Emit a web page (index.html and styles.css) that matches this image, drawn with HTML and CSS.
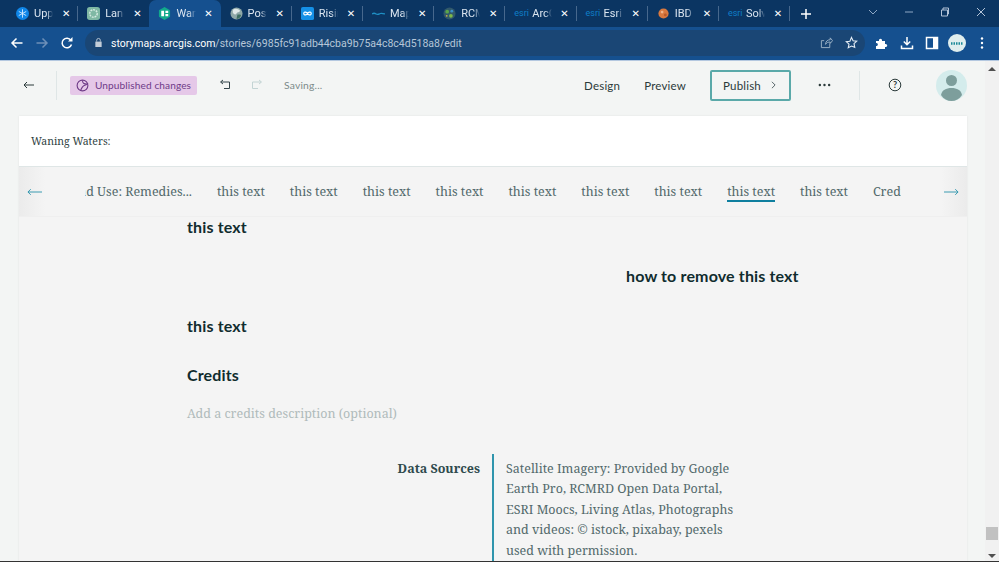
FILE: index.html
```html
<!DOCTYPE html>
<html lang="en">
<head>
<meta charset="utf-8">
<title>Waning Waters</title>
<link rel="stylesheet" href="styles.css">
</head>
<body>
<div class="tabstrip">
  <div class="tab sep"><svg class="fav" viewBox="0 0 14 14"><circle cx="7" cy="7" r="7" fill="#0f86e8"/><g stroke="#cfe8ff" stroke-width="1" fill="none"><path d="M7 2.500v9M3 4.800l8 4.400M3 9.200l8-4.400"/></g></svg><span class="title">Upper</span><span class="close">✕</span></div>
  <div class="tab"><svg class="fav" viewBox="0 0 14 14"><rect width="14" height="14" rx="3" fill="#7fb8a4"/><circle cx="7" cy="7" r="4" fill="none" stroke="#d6ebe2" stroke-width="1.600" stroke-dasharray="2 1"/></svg><span class="title">Land</span><span class="close">✕</span></div>
  <div class="tab active"><svg class="fav" viewBox="0 0 14 14"><path d="M7 0l6 3.500v7L7 14l-6-3.500v-7z" fill="#11a98c"/><path d="M3.500 4h3v6h-3zM8 4h3v2.500H8zM8 7.500h3V10H8z" fill="#fff"/></svg><span class="title">Waning</span><span class="close">✕</span></div>
  <div class="tab sep"><svg class="fav" viewBox="0 0 14 14"><circle cx="7" cy="7" r="6.500" fill="#8fa8a8"/><path d="M3 3c3-2 6-1 8 1-1 2-3 1-4 3S4 8 3 6z" fill="#dfe8e8"/><path d="M8 8c2 0 4 0 4 1-1 3-3 4-5 4z" fill="#3e6e62"/></svg><span class="title">Post</span><span class="close">✕</span></div>
  <div class="tab sep"><svg class="fav" viewBox="0 0 14 14"><rect width="14" height="14" rx="2" fill="#1590e6"/><path d="M3 7c0-3 4-1 4 0s4 3 4 0-4-1-4 0-4 3-4 0z" fill="none" stroke="#fff" stroke-width="1.300"/></svg><span class="title">Rising</span><span class="close">✕</span></div>
  <div class="tab sep"><svg class="fav" viewBox="0 0 14 14"><path d="M0 7.500c2-1.500 3-1 4.500 0s3 0 4.500-.5 3 0 5 .5" fill="none" stroke="#1f8fc4" stroke-width="1.400"/></svg><span class="title">Map</span><span class="close">✕</span></div>
  <div class="tab sep"><svg class="fav" viewBox="0 0 14 14"><circle cx="7" cy="7" r="6.500" fill="#31586a"/><circle cx="4.500" cy="5" r="2" fill="#5aa64a"/><circle cx="9.500" cy="4.500" r="1.500" fill="#3c8fc8"/><circle cx="8.500" cy="9.500" r="2" fill="#7cb84a"/><circle cx="4" cy="9.500" r="1" fill="#c8b04a"/></svg><span class="title">RCMRD</span><span class="close">✕</span></div>
  <div class="tab sep"><span class="esri">esri</span><span class="title">ArcGIS</span><span class="close">✕</span></div>
  <div class="tab sep"><span class="esri">esri</span><span class="title">Esri</span><span class="close">✕</span></div>
  <div class="tab sep"><svg class="fav" viewBox="0 0 14 14"><circle cx="7" cy="7" r="5.500" fill="#d9793f"/><circle cx="5.500" cy="5.500" r="1.500" fill="#f0b48a"/><circle cx="9" cy="8.500" r="1.500" fill="#b85a2a"/></svg><span class="title">IBD</span><span class="close">✕</span></div>
  <div class="tab sep"><span class="esri">esri</span><span class="title">Solve</span><span class="close">✕</span></div>
  <svg class="plus" viewBox="0 0 10 10"><path d="M5 0v10M0 5h10" stroke="#fff" stroke-width="1.500"/></svg>
  <div class="winctl">
    <svg viewBox="0 0 10 10"><path d="M1 3l4 4 4-4" fill="none" stroke="#8fa8c4" stroke-width="1"/></svg>
    <svg viewBox="0 0 10 10"><path d="M1 5h8" stroke="#8fa8c4" stroke-width="1"/></svg>
    <svg viewBox="0 0 10 10"><path d="M1.500 3h6v6h-6zM3 3V1h5.500v6H7.500" fill="none" stroke="#b4c4d8" stroke-width="1"/></svg>
    <svg viewBox="0 0 10 10"><path d="M1 1l8 8M9 1l-8 8" stroke="#b4c4d8" stroke-width="1"/></svg>
  </div>
</div>
<div class="toolbar">
  <svg class="tb" viewBox="0 0 14 14"><path d="M12.500 7H2M6.500 2.500L2 7l4.500 4.500" fill="none" stroke="#fff" stroke-width="1.500"/></svg>
  <svg class="tb" viewBox="0 0 14 14"><path d="M1.500 7H12M7.500 2.500L12 7l-4.500 4.500" fill="none" stroke="#6d8fb8" stroke-width="1.500"/></svg>
  <svg class="tb" viewBox="0 0 14 14"><path d="M11.500 8.500a4.800 4.800 0 1 1-.6-4.200" fill="none" stroke="#fff" stroke-width="1.500"/><path d="M12.500 1v4.500H8z" fill="#fff"/></svg>
  <div class="omnibox">
    <svg class="lock" viewBox="0 0 10 12"><rect x="1.500" y="5" width="7" height="6" fill="#c3cdd8"/><path d="M3 5V3.500a2 2 0 0 1 4 0V5" fill="none" stroke="#c3cdd8" stroke-width="1"/></svg>
    <span class="url"><b class="host">storymaps.arcgis.com</b>/stories/6985fc91adb44cba9b75a4c8c4d518a8/edit</span>
    <svg class="share" viewBox="0 0 14 14"><path d="M10.500 8v4.500H1.500V5h3M6 9c0-3 2-5 5-5V2l2.500 3L11 8V6.500C9 6.500 7 7 6 9z" fill="none" stroke="#9fb4c8" stroke-width="1"/></svg>
    <svg class="star" viewBox="0 0 14 14"><path d="M7 1.500l1.700 3.600 3.900.5-2.900 2.700.8 3.900L7 10.800l-3.500 1.900.8-3.900-2.900-2.700 3.900-.5z" fill="none" stroke="#e4ecf4" stroke-width="1.200"/></svg>
  </div>
  <div class="tools">
    <svg viewBox="0 0 14 14"><path d="M1 5h3c-.5-3 3.500-3 3 0h3v3c3-.5 3 3.500 0 3v2H1v-3c2.500.5 2.500-3.500 0-3z" fill="#fff"/></svg>
    <svg viewBox="0 0 14 14"><path d="M7 1v7.500M3.800 5.500L7 8.700l3.200-3.200M1.500 9.500v3h11v-3" fill="none" stroke="#fff" stroke-width="1.500"/></svg>
    <svg viewBox="0 0 14 14"><rect x="1.500" y="1.500" width="11" height="11" fill="none" stroke="#fff" stroke-width="1.500"/><rect x="8" y="1.500" width="4.500" height="11" fill="#fff"/></svg>
    <svg class="avatar-chrome" viewBox="0 0 18 18"><circle cx="9" cy="9" r="9" fill="#dfeeee"/><path d="M3 9.500h12" stroke="#1c8a99" stroke-width="2.400" stroke-dasharray="1.500 1"/></svg>
    <svg viewBox="0 0 14 14"><circle cx="7" cy="2.500" r="1.200" fill="#fff"/><circle cx="7" cy="7" r="1.200" fill="#fff"/><circle cx="7" cy="11.500" r="1.200" fill="#fff"/></svg>
  </div>
</div>
<div class="viewport">
  <div class="page">
    <header class="appbar">
      <svg class="back" viewBox="0 0 12 8"><path d="M11 4H1.500M4 1L1 4l3 3" fill="none" stroke="#2b3a3a" stroke-width="1"/></svg>
      <span class="vsep first"></span>
      <span class="badge"><svg viewBox="0 0 14 14"><circle cx="7" cy="7" r="5.800" fill="none" stroke="#6e3a87" stroke-width="1.200"/><path d="M7 1.500c0 3 1 4 5 4-1 1-4 1-5 3-1 1.500-2 3-2 4" fill="none" stroke="#6e3a87" stroke-width="1.200"/></svg>Unpublished changes</span>
      <svg class="hist undo" viewBox="0 0 12 12"><path d="M2 3h8.500v6.500H5M4 1L1.500 3 4 5" fill="none" stroke="#33454a" stroke-width="1"/></svg>
      <svg class="hist redo" viewBox="0 0 12 12"><path d="M10 3H1.500v6.500H7M8 1l2.500 2L8 5" fill="none" stroke="#c3d4d4" stroke-width="1"/></svg>
      <span class="saving">Saving...</span>
      <nav class="appnav">
        <span class="applink design">Design</span>
        <span class="applink">Preview</span>
        <span class="publish">Publish<svg viewBox="0 0 6 10"><path d="M1 1l4 4-4 4" fill="none" stroke="#33454a" stroke-width="1"/></svg></span>
        <svg class="dots" viewBox="0 0 14 4"><circle cx="2" cy="2" r="1.300" fill="#2b3a3a"/><circle cx="7" cy="2" r="1.300" fill="#2b3a3a"/><circle cx="12" cy="2" r="1.300" fill="#2b3a3a"/></svg>
        <span class="vsep"></span>
        <svg class="help" viewBox="0 0 14 14"><circle cx="7" cy="7" r="5.800" fill="none" stroke="#2b3a3a" stroke-width="1"/><text x="7" y="10" text-anchor="middle" class="helpq">?</text></svg>
        <svg class="user" viewBox="0 0 31 31"><circle cx="15.500" cy="15.500" r="15.500" fill="#d4ecec"/><circle cx="15.500" cy="10.500" r="5.500" fill="#7d9e9c"/><path d="M5 25c1-5 5-7 10.500-7S25 20 26 25c-5 8-16 8-21 0z" fill="#7d9e9c"/></svg>
      </nav>
    </header>
    <div class="sheet">
      <div class="storytitle">Waning Waters:</div>
      <div class="storynav">
        <div class="fade left"><svg viewBox="0 0 16 8"><path d="M16 4H1M4 1L1 4l3 3" fill="none" stroke="#2f95ad" stroke-width="1"/></svg></div>
        <div class="navitems">
          <span class="navfirst"><span>Land Use: Remedies...</span></span>
          <span>this text</span><span>this text</span><span>this text</span><span>this text</span><span>this text</span><span>this text</span><span>this text</span>
          <span class="current">this text</span>
          <span>this text</span>
          <span class="navlast">Credits</span>
        </div>
        <div class="fade right"><svg viewBox="0 0 16 8"><path d="M0 4h15M12 1l3 3-3 3" fill="none" stroke="#2f95ad" stroke-width="1"/></svg></div>
      </div>
      <main class="story">
        <h2 class="h">this text</h2>
        <h2 class="h side">how to remove this text</h2>
        <h2 class="h">this text</h2>
        <h2 class="h">Credits</h2>
        <p class="credits-hint">Add a credits description (optional)</p>
        <div class="source">
          <div class="source-label">Data Sources</div>
          <div class="source-text">Satellite Imagery: Provided by Google Earth Pro, RCMRD Open Data Portal, ESRI Moocs, Living Atlas, Photographs and videos: © istock, pixabay, pexels used with permission.</div>
        </div>
      </main>
    </div>
  </div>
  <div class="scrollbar">
    <svg class="sb-arrow" viewBox="0 0 8 4"><path d="M0 4l4-4 4 4z" fill="#505050"/></svg>
    <span class="thumb"></span>
    <svg class="sb-arrow" viewBox="0 0 8 4"><path d="M0 0l4 4 4-4z" fill="#505050"/></svg>
  </div>
</div>
<div class="taskline"></div>
</body>
</html>
```
FILE: styles.css
```css
* { box-sizing: border-box; }
html, body { margin: 0; padding: 0; }
body {
  width: 999px;
  height: 562px;
  overflow: hidden;
  display: flex;
  flex-direction: column;
  font-family: "Lato", "Liberation Sans", sans-serif;
  background: #f3f5f4;
}

/* browser tabs */
.tabstrip {
  height: 27px;
  flex: none;
  display: flex;
  align-items: stretch;
  padding-left: 7px;
  background: #0b3562;
}
.tab {
  width: 71.200px;
  flex: none;
  display: flex;
  align-items: center;
  padding: 0 7px 1px 9px;
  position: relative;
  font: 11px "Roboto", sans-serif;
  color: #dbe5f0;
}
.tab.sep::after {
  content: "";
  position: absolute;
  right: 0;
  top: 6px;
  height: 15px;
  width: 1px;
  background: #47688d;
}
.tab.active {
  background: #15508f;
  border-radius: 7px 7px 0 0;
}
.fav { width: 13px; height: 13px; flex: none; margin-right: 5px; }
.esri {
  width: 13px;
  margin-right: 5px;
  flex: none;
  font-size: 9px;
  color: #0f7fc8;
}
.title {
  flex: 1;
  min-width: 0;
  margin-right: 8px;
  overflow: hidden;
  white-space: nowrap;
  -webkit-mask-image: linear-gradient(90deg, #000 65%, transparent 100%);
  mask-image: linear-gradient(90deg, #000 65%, transparent 100%);
}
.close {
  width: 10px;
  flex: none;
  font-size: 10px;
  font-family: "DejaVu Sans", sans-serif;
  font-weight: 700;
  color: #fff;
  text-align: center;
}
.plus { width: 10px; height: 10px; align-self: center; margin-left: 11px; flex: none; }
.winctl {
  margin-left: auto;
  display: flex;
  align-items: center;
  gap: 26px;
  padding: 0 13px 4px 0;
}
.winctl svg { width: 10px; height: 10px; }

/* browser toolbar */
.toolbar {
  height: 34px;
  flex: none;
  display: flex;
  align-items: center;
  padding: 3px 0 5px 10px;
  background: #15508f;
  border-bottom: 1px solid #b4c8e0;
}
.tb { width: 14px; height: 14px; flex: none; margin-right: 11px; }
.omnibox {
  width: 780px;
  height: 26px;
  flex: none;
  display: flex;
  align-items: center;
  padding: 0 7px 0 9px;
  border-radius: 13px;
  background: #1a4675;
}
.lock { width: 9px; height: 11px; flex: none; margin-right: 8px; }
.url {
  padding-top: 1px;
  font: 10.500px "Roboto", sans-serif;
  color: #b6c6d8;
  white-space: nowrap;
}
.host { font-weight: 400; color: #fff; }
.share { width: 13px; height: 13px; margin-left: auto; margin-right: 12px; }
.star { width: 13px; height: 13px; }
.tools {
  flex: 1;
  display: flex;
  align-items: center;
  gap: 11px;
  padding-left: 10px;
}
.tools svg { width: 14px; height: 14px; flex: none; }
.tools .avatar-chrome { width: 18px; height: 18px; margin: 0 -2px; }

/* viewport */
.viewport {
  flex: 1;
  min-height: 0;
  display: flex;
  overflow: hidden;
}
.page { flex: 1; min-width: 0; display: flex; flex-direction: column; }
.appbar {
  height: 55px;
  flex: none;
  display: flex;
  align-items: center;
  padding: 0 18px 7px 23px;
  font-size: 12px;
  color: #2b3a3a;
}
.back { width: 12px; height: 8px; flex: none; }
.vsep { width: 1px; height: 29px; background: #dfe6e6; flex: none; }
.vsep.first { margin: 0 13px 0 21px; }
.badge {
  height: 19px;
  width: 127px;
  flex: none;
  display: flex;
  align-items: center;
  padding-left: 6px;
  gap: 6px;
  border-radius: 2px;
  background: #e5c8e8;
  color: #6e3a87;
  font-size: 10.100px;
  letter-spacing: .1px;
  white-space: nowrap;
}
.badge svg { width: 13px; height: 13px; flex: none; }
.hist { width: 12px; height: 12px; flex: none; }
.undo { margin-left: 22px; }
.redo { margin-left: 20px; }
.saving { margin-left: 21px; font-size: 10.300px; color: #7b8a8a; letter-spacing: .2px; }
.appnav { margin-left: auto; display: flex; align-items: center; }
.applink { font-size: 11.500px; letter-spacing: .2px; }
.design { margin-right: 24px; }
.publish {
  width: 81px;
  height: 31px;
  margin: 0 27px 0 24px;
  display: flex;
  align-items: center;
  padding-left: 11px;
  gap: 10px;
  border: 2px solid #5aa9a9;
  border-radius: 2px;
  font-size: 11.500px;
  letter-spacing: .2px;
}
.publish svg { width: 5px; height: 8px; }
.dots { width: 13px; height: 4px; margin-right: 28px; }
.help { width: 14px; height: 14px; margin: 0 34px 0 28px; }
.helpq { font: 700 9px "Lato", sans-serif; fill: #2b3a3a; }
.user { width: 31px; height: 31px; }

/* story sheet */
.sheet {
  flex: 1;
  min-height: 0;
  margin: 0 18px 0 19px;
  display: flex;
  flex-direction: column;
  background: #f4f4f4;
  box-shadow: 0 0 2px rgba(0, 0, 0, .08);
}
.storytitle {
  height: 51px;
  flex: none;
  display: flex;
  align-items: center;
  padding: 0 0 1px 12px;
  background: #fff;
  border-bottom: 1px solid #dfe6e6;
  font: 10.500px "Noto Serif", "DejaVu Serif Condensed", "DejaVu Serif", serif;
  color: #2f3f42;
}
.storynav {
  height: 50px;
  flex: none;
  display: flex;
  align-items: center;
  justify-content: space-between;
  border-bottom: 1px solid #efefef;
  font: 12.500px "Noto Serif", "DejaVu Serif Condensed", "DejaVu Serif", serif;
  color: #52696b;
}
.fade {
  width: 26px;
  height: 100%;
  flex: none;
  display: flex;
  align-items: center;
}
.fade svg { width: 15px; height: 8px; }
.fade.left { background: linear-gradient(90deg, #ebebeb, #f4f4f4); justify-content: flex-start; padding-left: 8px; }
.fade.right { background: linear-gradient(270deg, #ebebeb, #f4f4f4); justify-content: flex-end; padding-right: 8px; }
.navitems {
  width: 816px;
  flex: none;
  display: flex;
  gap: 24.900px;
  overflow: hidden;
  white-space: nowrap;
  margin: 0 auto;
}
.navitems > span { flex: none; width: 48px; height: 20px; line-height: 20px; text-align: center; }
.navitems .navfirst { width: 107px; display: flex; justify-content: flex-end; overflow: hidden; }
.navfirst span { flex: none; }
.navitems .navlast { width: 28px; overflow: hidden; text-align: left; }
.navitems .current { border-bottom: 2px solid #0f7f9f; }
.story { padding: 0 0 0 168px; flex: 1; min-height: 0; overflow: hidden; }
.h {
  margin: 0 0 29.400px;
  height: 20px;
  font: 700 16px/20px "Lato", sans-serif;
  letter-spacing: .15px;
  color: #102c2e;
}
.side { padding-left: 439px; }
.credits-hint {
  margin: -10.600px 0 0;
  height: 20px;
  font: 12.500px/20px "Noto Serif", "DejaVu Serif Condensed", "DejaVu Serif", serif;
  color: #b0bbbb;
}
.source { display: flex; margin: 30px 0 0; }
.source-label {
  width: 305px;
  padding: 5px 12px 0 0;
  text-align: right;
  font: 700 12.500px/20.500px "Noto Serif", "DejaVu Serif Condensed", "DejaVu Serif", serif;
  color: #2f4a4d;
}
.source-text {
  width: 244px;
  border-left: 2px solid #2f95ad;
  padding: 5px 0 0 12px;
  font: 12.500px/20.500px "Noto Serif", "DejaVu Serif Condensed", "DejaVu Serif", serif;
  color: #52696b;
}

/* scrollbar */
.scrollbar {
  width: 14px;
  flex: none;
  display: flex;
  flex-direction: column;
  align-items: center;
  padding: 6px 0 3px;
  background: #f1f1f1;
}
.sb-arrow { width: 8px; height: 4px; flex: none; }
.thumb { width: 12px; height: 13px; margin-top: auto; margin-bottom: 14px; background: #c1c1c1; }
.taskline { height: 1px; flex: none; background: #333; }
```
